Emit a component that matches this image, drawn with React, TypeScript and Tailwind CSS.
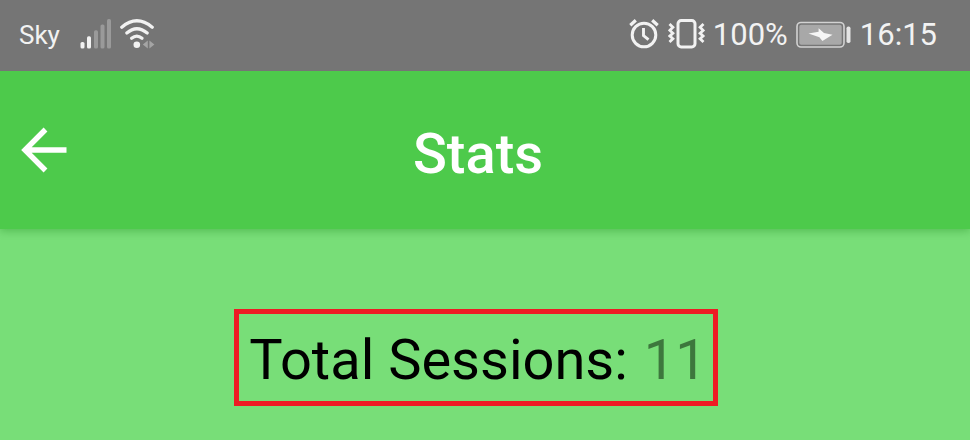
function SignalIcon() {
  return (
    <svg width="32" height="30" viewBox="0 0 32 30" aria-label="Mobile signal" role="img">
      <g fill="#f2f2f2">
        <rect x="0.5" y="23" width="4" height="6.5" rx="1.6" />
        <rect x="7" y="17.3" width="4" height="12.2" rx="1.6" />
      </g>
      <g fill="#9a9a9a">
        <rect x="14" y="11.3" width="4" height="18.2" rx="1.6" />
        <rect x="20.5" y="5.5" width="4" height="24" rx="1.6" />
        <rect x="27" y="0" width="4" height="29.5" rx="1.6" />
      </g>
    </svg>
  );
}

function WifiIcon() {
  return (
    <svg width="36" height="30" viewBox="0 0 36 30" aria-label="Wi-Fi" role="img">
      <g fill="none" stroke="#f2f2f2" strokeWidth="3.3" strokeLinecap="round">
        <path d="M1.8 8.2Q16.8 -4.6 32.2 8.2" />
        <path d="M6.8 14Q16.8 5.4 27.2 14" />
        <path d="M11.6 19.2Q16.8 15 22 19.2" />
      </g>
      <circle cx="16.8" cy="25.7" r="3.3" fill="#f2f2f2" />
      <path d="M27.8 21.5v8l-5-4zM29.4 21.5v8l5-4z" fill="#a4a4a4" />
    </svg>
  );
}

function AlarmIcon() {
  return (
    <svg width="30" height="30" viewBox="0 0 30 30" fill="none" stroke="#f2f2f2" aria-label="Alarm set" role="img">
      <circle cx="15" cy="16" r="11.8" strokeWidth="3" />
      <path d="M14.5 9v7.5l5 4.2" strokeWidth="2.9" />
      <path d="M1.3 6.3L6.8 1.3M28.7 6.3L23.2 1.3" strokeWidth="3.2" />
    </svg>
  );
}

function VibrateIcon() {
  return (
    <svg width="38" height="30" viewBox="0 0 38 30" fill="none" stroke="#f2f2f2" aria-label="Vibrate mode" role="img">
      <rect x="10" y="1.6" width="17" height="26.4" rx="3.2" strokeWidth="3" />
      <path
        d="M1.5 5L4.9 8.3L1.9 11.4L4.9 14.2L1.9 17L4.9 19.8L1.5 23M35.5 5L32.1 8.3L35.1 11.4L32.1 14.2L35.1 17L32.1 19.8L35.5 23"
        strokeWidth="2.8"
      />
    </svg>
  );
}

function BatteryIcon() {
  return (
    <svg width="56" height="28" viewBox="0 0 56 28" aria-label="Battery charging" role="img">
      <rect x="1" y="1.5" width="47" height="24.5" rx="4" fill="none" stroke="#d2d2d2" strokeWidth="1.6" />
      <rect x="3.3" y="3.8" width="42.4" height="19.9" rx="2" fill="#a8a8a8" />
      <path d="M12.5 12.6L22.6 10.8L22.6 7.3L28 12L36.5 13.8L26.4 20L23.4 16.2z" fill="#f6f6f6" />
      <rect x="50.5" y="5.5" width="4" height="16.5" rx="1.8" fill="#e4e4e4" />
    </svg>
  );
}

export default function App() {
  return (
    <div className="flex min-h-screen flex-col bg-[#78de78] font-['Roboto',sans-serif]">
      <div className="relative z-10 flex h-[71px] items-center justify-between bg-[#757575] pr-[33px] pb-0.5 pl-[19px] text-[#f2f2f2]">
        <div className="flex items-center">
          <span className="text-[26px] leading-8">Sky</span>
          <div className="flex items-center gap-2 pb-0.5 pl-5">
            <SignalIcon />
            <WifiIcon />
          </div>
        </div>
        <div className="flex items-center text-[31px] leading-10">
          <div className="flex items-center gap-[9px] pr-[7px] pb-0.5">
            <AlarmIcon />
            <VibrateIcon />
          </div>
          <span>100%</span>
          <span className="px-2">
            <BatteryIcon />
          </span>
          <span>16:15</span>
        </div>
      </div>

      <header className="grid h-[158px] grid-cols-[80px_1fr_94px] items-center bg-[#4dca4b] shadow-[0_2px_8px_rgba(0,110,0,0.3)]">
        <button type="button" aria-label="Back" className="flex justify-center pl-2">
          <svg width="46" height="46" viewBox="0 0 46 46" fill="none" stroke="white" strokeWidth="5.4">
            <path d="M24.5 2.5L4 23L24.5 43.5M4 23H45.5" />
          </svg>
        </button>
        <h1 className="pt-2 text-center text-[56px] leading-[64px] font-medium text-white">Stats</h1>
      </header>

      <main className="flex justify-center pt-20 pr-[18px]">
        <p className="flex gap-4 border-5 border-[#ed1c24] pt-3.5 pr-[6px] pb-[9px] pl-[10px] text-[56px] leading-[64px] text-black">
          <span>Total Sessions:</span>
          <span className="text-[#3d773d]">11</span>
        </p>
      </main>
    </div>
  );
}
